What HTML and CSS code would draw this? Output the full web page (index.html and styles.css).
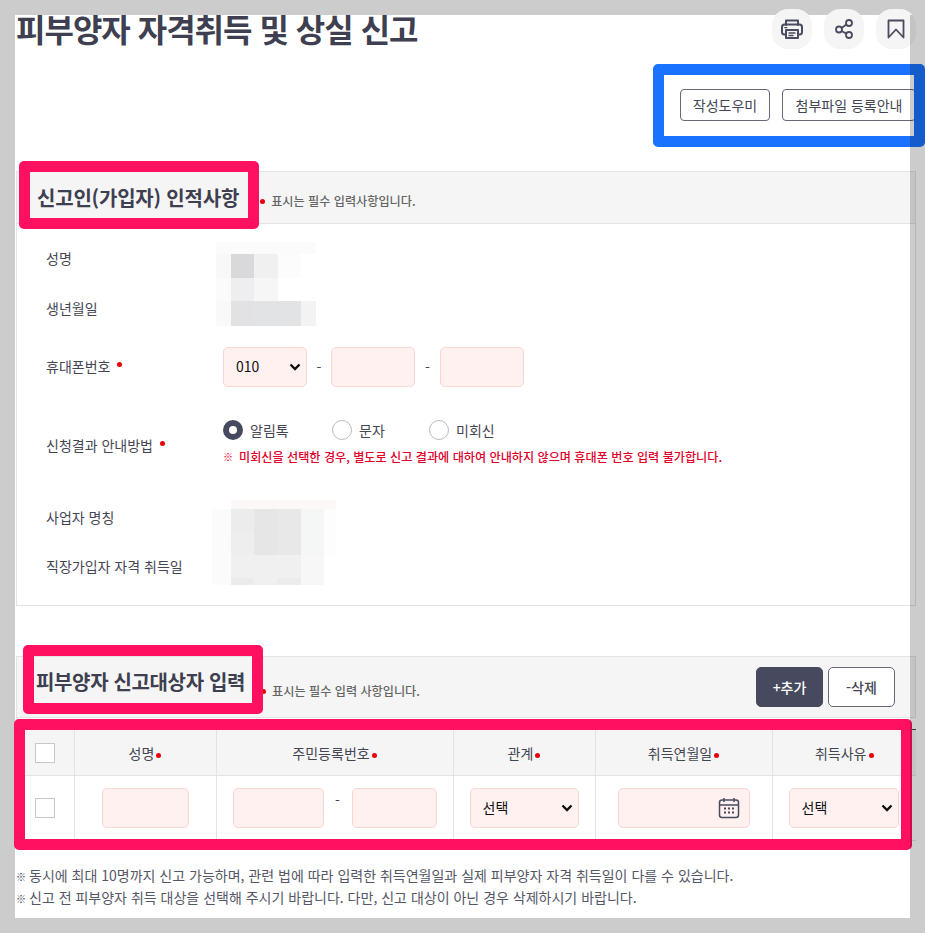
FILE: index.html
```html
<!DOCTYPE html>
<html lang="ko">
<head>
<meta charset="utf-8">
<title>피부양자 자격취득 및 상실 신고</title>
<link rel="stylesheet" href="styles.css">
</head>
<body>
<main class="sheet">
  <div class="inner">
    <header class="page-head">
      <h1 class="page-title">피부양자 자격취득 및 상실 신고</h1>
      <div class="icon-row">
        <button class="icon-btn" type="button" aria-label="인쇄">
          <svg width="24" height="24" viewBox="0 0 24 24" fill="none" stroke="#4a4b5e" stroke-width="2" stroke-linejoin="round" stroke-linecap="round"><path d="M6 8V3.5h12V8"/><rect x="2" y="7.5" width="20" height="10" rx="2.5"/><path d="M6 13h12v8H6z" fill="#f5f5f5"/><path d="M9 16h6M9 18.5h4" stroke-width="1.4"/><path d="M4.8 10.6h2" stroke-width="1.4"/></svg>
        </button>
        <button class="icon-btn" type="button" aria-label="공유">
          <svg width="24" height="24" viewBox="0 0 24 24" fill="none" stroke="#4a4b5e" stroke-width="1.8"><circle cx="17" cy="6" r="3"/><circle cx="7" cy="12.5" r="3"/><circle cx="17" cy="18" r="3"/><path d="M14.4 7.6 9.6 10.9M9.6 14l4.8 2.6"/></svg>
        </button>
        <button class="icon-btn" type="button" aria-label="북마크">
          <svg width="24" height="24" viewBox="0 0 24 24" fill="none" stroke="#4a4b5e" stroke-width="1.8" stroke-linejoin="round"><path d="M4.5 3.5h15v17l-7.5-8-7.5 8z"/></svg>
        </button>
      </div>
    </header>

    <div class="guide-row">
      <button class="outline-btn guide-short" type="button">작성도우미</button>
      <button class="outline-btn guide-long" type="button">첨부파일 등록안내</button>
    </div>

    <section class="section-one">
      <div class="section-head head-one">
        <h2 class="section-title">신고인(가입자) 인적사항</h2>
        <span class="req-dot note-dot-one"></span>
        <span class="req-note note-one">표시는 필수 입력사항입니다.</span>
      </div>
      <div class="section-body">
        <div class="pair pair-one">
          <div class="labels">
            <div class="label">성명</div>
            <div class="label">생년월일</div>
          </div>
          <svg class="mosaic mosaic-one" width="100" height="84" viewBox="0 0 100 84" shape-rendering="crispEdges">
            <rect width="100" height="12" fill="#fbfbfb"/>
            <rect y="12" width="15" height="24" fill="#f8f8f8"/><rect x="15" y="12" width="23" height="24" fill="#d9d9db"/><rect x="38" y="12" width="24" height="24" fill="#f0f0f1"/><rect x="62" y="12" width="23" height="24" fill="#fcfcfc"/>
            <rect y="36" width="15" height="23" fill="#fbfbfb"/><rect x="15" y="36" width="23" height="23" fill="#eeeef0"/><rect x="38" y="36" width="24" height="23" fill="#f6f6f7"/>
            <rect y="59" width="15" height="25" fill="#f9f9f9"/><rect x="15" y="59" width="23" height="25" fill="#e2e2e4"/><rect x="38" y="59" width="47" height="25" fill="#e2e3e5"/><rect x="85" y="59" width="15" height="25" fill="#f3f3f4"/>
          </svg>
        </div>

        <div class="row phone-row">
          <div class="label">휴대폰번호<span class="req-dot label-dot"></span></div>
          <div class="phone-fields">
            <select class="field select phone-select"><option>010</option></select>
            <span class="dash">-</span>
            <input class="field phone-input" type="text">
            <span class="dash dash-wide">-</span>
            <input class="field phone-input" type="text">
          </div>
        </div>

        <div class="row notify-row">
          <div class="label">신청결과 안내방법<span class="req-dot label-dot"></span></div>
          <div class="notify-fields">
            <div class="radios">
              <label class="radio radio-a"><input type="radio" name="notice" checked><span>알림톡</span></label>
              <label class="radio radio-b"><input type="radio" name="notice"><span>문자</span></label>
              <label class="radio"><input type="radio" name="notice"><span>미회신</span></label>
            </div>
            <p class="warn"><span class="warn-mark">※</span>미회신을 선택한 경우, 별도로 신고 결과에 대하여 안내하지 않으며 휴대폰 번호 입력 불가합니다.</p>
          </div>
        </div>

        <div class="pair pair-two">
          <div class="labels labels-two">
            <div class="label">사업자 명칭</div>
            <div class="label">직장가입자 자격 취득일</div>
          </div>
          <svg class="mosaic mosaic-two" width="124" height="85" viewBox="0 0 124 85" shape-rendering="crispEdges">
            <rect x="19" width="105" height="9" fill="#fdf8f8"/>
            <rect y="9" width="19" height="69" fill="#fbfbfb"/><rect y="78" width="19" height="7" fill="#fbfbfb"/>
            <rect x="19" y="9" width="23" height="23" fill="#ececed"/><rect x="42" y="9" width="23" height="46" fill="#e6e6e7"/><rect x="65" y="9" width="24" height="46" fill="#e8e8e9"/><rect x="89" y="9" width="23" height="46" fill="#f5f6f6"/><rect x="112" y="9" width="12" height="46" fill="#fdfdfd"/>
            <rect x="19" y="32" width="23" height="23" fill="#eeeeef"/>
            <rect x="19" y="55" width="70" height="23" fill="#f0f0f0"/><rect x="89" y="55" width="23" height="30" fill="#f7f7f7"/>
            <rect x="19" y="78" width="23" height="7" fill="#ebebec"/><rect x="42" y="78" width="23" height="7" fill="#f0f0f0"/><rect x="65" y="78" width="24" height="7" fill="#ececed"/>
          </svg>
        </div>
      </div>
    </section>

    <section class="section-two">
      <div class="section-head head-two">
        <h2 class="section-title title-two">피부양자 신고대상자 입력</h2>
        <span class="req-dot note-dot-two"></span>
        <span class="req-note note-two">표시는 필수 입력 사항입니다.</span>
        <div class="head-actions">
          <button class="action-btn action-add" type="button">+추가</button>
          <button class="action-btn action-del" type="button">-삭제</button>
        </div>
      </div>

      <table class="target-table">
        <colgroup>
          <col class="col-check"><col class="col-name"><col class="col-id"><col class="col-rel"><col class="col-date"><col class="col-reason">
        </colgroup>
        <thead>
          <tr>
            <th><input class="check" type="checkbox"></th>
            <th>성명<span class="req-dot th-dot"></span></th>
            <th>주민등록번호<span class="req-dot th-dot"></span></th>
            <th>관계<span class="req-dot th-dot"></span></th>
            <th>취득연월일<span class="req-dot th-dot"></span></th>
            <th>취득사유<span class="req-dot th-dot"></span></th>
          </tr>
        </thead>
        <tbody>
          <tr>
            <td class="cell-center"><input class="check" type="checkbox"></td>
            <td class="cell-center"><input class="field name-input" type="text"></td>
            <td>
              <div class="id-fields">
                <input class="field id-front" type="text">
                <span class="id-dash">-</span>
                <input class="field id-back" type="text">
              </div>
            </td>
            <td class="cell-pad"><select class="field select rel-select"><option>선택</option></select></td>
            <td class="cell-center">
              <div class="field date-field">
                <svg width="22" height="22" viewBox="0 0 22 22" fill="none" stroke="#4a4b5e" stroke-width="1.5"><rect x="1.5" y="3" width="19" height="17.5" rx="2.5"/><path d="M1.5 8h19M6 1v4M16 1v4"/><path d="M6 11.5h2M10 11.5h2M14 11.5h2M6 15.5h2M10 15.5h2M14 15.5h2" stroke-width="2"/></svg>
              </div>
            </td>
            <td class="cell-pad"><select class="field select reason-select"><option>선택</option></select></td>
          </tr>
        </tbody>
      </table>
    </section>

    <ul class="notes">
      <li><span class="note-mark">※</span>동시에 최대 10명까지 신고 가능하며, 관련 법에 따라 입력한 취득연월일과 실제 피부양자 자격 취득일이 다를 수 있습니다.</li>
      <li><span class="note-mark">※</span>신고 전 피부양자 취득 대상을 선택해 주시기 바랍니다. 다만, 신고 대상이 아닌 경우 삭제하시기 바랍니다.</li>
    </ul>
  </div>
</main>

<div class="mark mark-blue"></div>
<div class="mark mark-title-one"></div>
<div class="mark mark-title-two"></div>
<div class="mark mark-table"></div>
<div class="side-shade"></div>
</body>
</html>
```

FILE: styles.css
```css
* { box-sizing: border-box; }

html, body { margin: 0; padding: 0; }

body {
  position: relative;
  width: 925px;
  height: 933px;
  overflow: hidden;
  background: #cccccc;
  font-family: "Noto Sans CJK KR", "Noto Sans", sans-serif;
  color: #444654;
  font-size: 14px;
}

.sheet {
  margin: 15px 0 0 15px;
  width: 910px;
  height: 903px;
  padding-left: 1px;
  background: #ffffff;
}

.inner { width: 900px; }

/* page head */
.page-head {
  display: flex;
  justify-content: space-between;
  height: 30px;
}

.page-title {
  margin: -2px 0 0;
  font-size: 32px;
  line-height: 30px;
  font-weight: 700;
  color: #3e3f50;
  letter-spacing: -1px;
  white-space: nowrap;
}

.icon-row {
  display: flex;
  gap: 12px;
  margin: -6px 0 0;
}

.icon-btn {
  display: flex;
  align-items: center;
  justify-content: center;
  width: 40px;
  height: 40px;
  padding: 0;
  border: 0;
  border-radius: 16px;
  background: #f5f5f5;
}

.guide-row {
  display: flex;
  justify-content: flex-end;
  gap: 12px;
  margin: 44px 0 0;
}

.outline-btn {
  height: 32px;
  padding: 0;
  border: 1px solid #666876;
  border-radius: 4px;
  background: #ffffff;
  font: inherit;
  color: #444654;
}

.guide-short { width: 90px; }
.guide-long { width: 134px; }

/* section heads */
.section-one { margin-top: 50px; }
.section-two { margin-top: 50px; }

.section-head {
  display: flex;
  align-items: center;
  border: 1px solid #e3e3e3;
  background: #f5f5f5;
}

.head-one { height: 53px; padding-left: 20px; }
.head-two { height: 62px; padding-left: 20px; }

.section-title {
  margin: 0;
  font-size: 20px;
  line-height: 26px;
  font-weight: 700;
  letter-spacing: -0.2px;
  color: #3e3f50;
  white-space: nowrap;
}

.title-two {
  margin: 0 0 10px -1px;
  letter-spacing: -0.35px;
}

.req-dot {
  display: inline-block;
  width: 5px;
  height: 5px;
  border-radius: 50%;
  background: #e8000b;
}

.note-dot-one { margin: 8px 0 0 21px; }
.note-dot-two { margin: 8px 0 0 16px; }

.req-note {
  font-size: 12.15px;
  font-weight: 500;
  color: #666;
  white-space: nowrap;
}

.note-one { margin: 6px 0 0 6px; }
.note-two { margin: 6px 0 0 6px; }

.head-actions {
  display: flex;
  gap: 5px;
  margin-left: auto;
  margin-right: 20px;
}

.action-btn {
  width: 67px;
  height: 40px;
  padding: 0;
  border-radius: 5px;
  font: inherit;
  font-weight: 500;
}

.action-add {
  border: 1px solid #474a5e;
  background: #474a5e;
  color: #ffffff;
}

.action-del {
  border: 1px solid #666876;
  background: #ffffff;
  color: #444654;
}

/* section body */
.section-body {
  height: 382px;
  border: 1px solid #e3e3e3;
  border-top: 0;
  padding: 9px 0 0 29px;
}

.pair { display: flex; }

.labels { width: 170px; }

.label {
  display: flex;
  align-items: center;
  height: 50px;
  white-space: nowrap;
  color: #444654;
}

.labels-two { width: 166px; margin-top: -2px; }
.labels-two .label { height: 49px; }

.mosaic { display: block; flex: none; }
.mosaic-one { margin-top: 9px; }
.mosaic-two { margin-top: 6px; }

.row { display: flex; align-items: center; }

.row .label { width: 177px; height: auto; margin-bottom: 2px; }

.label-dot { margin: 0 0 3px 7px; }

.phone-row { margin-top: 14px; height: 40px; }

.phone-fields {
  display: flex;
  align-items: center;
}

.field {
  height: 40px;
  border: 1px solid #fdd5d0;
  border-radius: 5px;
  background-color: #fff1f0;
  font-family: inherit;
  font-size: 14px;
  color: #111;
}

.select {
  appearance: none;
  padding: 0 0 2px 12px;
  background-image: url("data:image/svg+xml,%3Csvg xmlns='http://www.w3.org/2000/svg' width='12' height='8' viewBox='0 0 12 8'%3E%3Cpath d='M1.5 1.5 6 6l4.5-4.5' fill='none' stroke='%23111' stroke-width='2.4'/%3E%3C/svg%3E");
  background-repeat: no-repeat;
  background-position: right 5px center;
}

.phone-select { width: 84px; }
.phone-input { width: 84px; }

.dash {
  width: 24px;
  text-align: center;
  color: #444654;
}

.dash-wide { width: 25px; }

.notify-row { margin-top: 33px; height: 52px; }

.notify-fields { align-self: flex-start; }

.radios {
  display: flex;
  align-items: center;
  height: 20px;
}

.radio {
  display: flex;
  align-items: center;
  gap: 7px;
  color: #444654;
  white-space: nowrap;
}

.radio-a { width: 109px; }
.radio-b { width: 97px; }

.radio input {
  appearance: none;
  flex: none;
  width: 20px;
  height: 20px;
  margin: 0;
  border: 1px solid #bbbbbb;
  border-radius: 50%;
  background: #ffffff;
}

.radio input:checked {
  border: 6px solid #474a5e;
}

.warn {
  display: flex;
  margin: 7px 0 0;
  font-size: 12.14px;
  line-height: 20px;
  font-weight: 500;
  color: #e0002a;
  white-space: nowrap;
}

.warn-mark { width: 16px; font-size: 10px; font-weight: 900; }

.pair-two { margin-top: 22px; }

/* table */
.target-table {
  width: 900px;
  margin-top: 11px;
  border-collapse: collapse;
  table-layout: fixed;
  border-top: 1px solid #444654;
}

.col-check { width: 58px; }
.col-name { width: 142px; }
.col-id { width: 237px; }
.col-rel { width: 142px; }
.col-date { width: 177px; }
.col-reason { width: 144px; }

.target-table th,
.target-table td {
  padding: 0;
  border-bottom: 1px solid #e3e3e3;
  border-left: 1px solid #e3e3e3;
}

.target-table th:first-child,
.target-table td:first-child { border-left: 0; }

.target-table th {
  height: 46px;
  background: #f5f5f5;
  font-size: 14px;
  font-weight: 400;
  color: #444654;
}

.target-table td { height: 65px; }

.th-dot { margin: 0 0 1px 2px; }

.cell-center { text-align: center; }
.cell-pad { padding-left: 16px !important; }

.check {
  appearance: none;
  display: block;
  width: 20px;
  height: 20px;
  margin: 0 0 0 19px;
  border: 1px solid #c8c8c8;
  background: #ffffff;
}

.name-input { display: block; width: 87px; margin: 0 auto; }

.id-fields {
  display: flex;
  padding-left: 16px;
}

.id-front { width: 91px; }
.id-back { width: 85px; }

.id-dash {
  width: 28px;
  text-align: center;
  line-height: 24px;
}

.rel-select { display: block; width: 109px; }
.reason-select { display: block; width: 110px; }

.date-field {
  display: flex;
  align-items: center;
  justify-content: flex-end;
  width: 132px;
  margin: 0 auto;
  padding-right: 9px;
}

/* notes */
.notes {
  margin: 24px 0 0;
  padding: 0;
  list-style: none;
  font-size: 14px;
  line-height: 21px;
  color: #555766;
  white-space: nowrap;
}

.note-mark {
  display: inline-block;
  width: 13px;
  font-size: 10px;
  font-weight: 900;
  color: #44454f;
}

/* annotation frames drawn over the page */
.mark {
  position: absolute;
  border: 11.5px solid #ff1060;
  border-radius: 5px;
}

.mark-blue {
  left: 653px;
  top: 64px;
  width: 272px;
  height: 83px;
  border-color: #1a73ff;
}

.mark-title-one { left: 19px; top: 161px; width: 240px; height: 68px; }
.mark-title-two { left: 23px; top: 645px; width: 240px; height: 69px; }
.mark-table { left: 14px; top: 719px; width: 898px; height: 131px; }

.side-shade {
  position: absolute;
  left: 910px;
  top: 15px;
  width: 15px;
  height: 903px;
  background: rgba(0, 0, 0, 0.2);
}
```
